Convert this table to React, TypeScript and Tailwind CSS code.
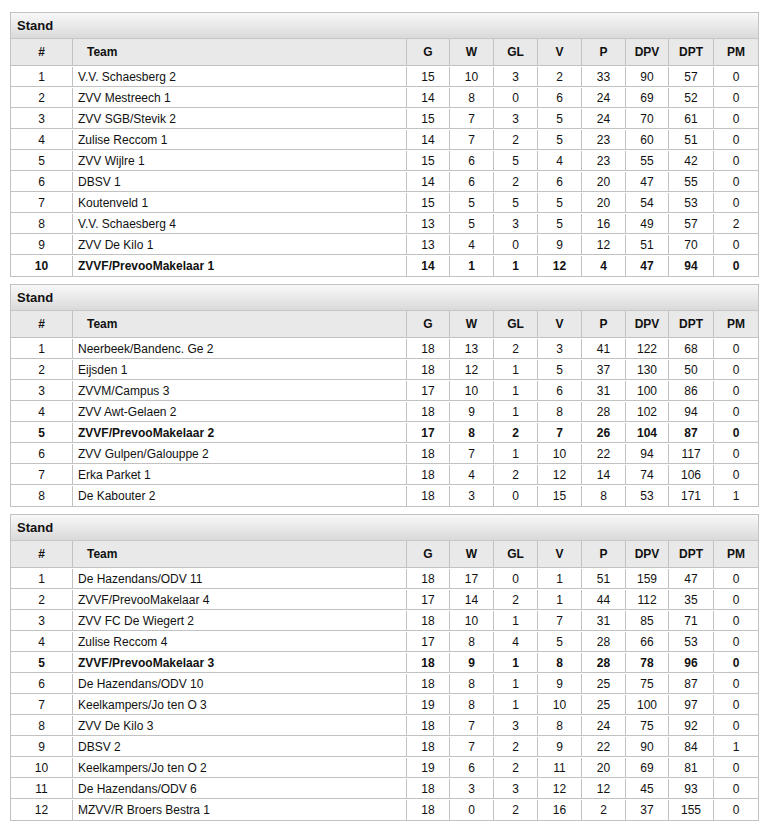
type Row = [string, string, number, number, number, number, number, number, number, number, boolean?];

const cols = ["#", "Team", "G", "W", "GL", "V", "P", "DPV", "DPT", "PM"];

const tables: Row[][] = [
  [
    ["1", "V.V. Schaesberg 2", 15, 10, 3, 2, 33, 90, 57, 0],
    ["2", "ZVV Mestreech 1", 14, 8, 0, 6, 24, 69, 52, 0],
    ["3", "ZVV SGB/Stevik 2", 15, 7, 3, 5, 24, 70, 61, 0],
    ["4", "Zulise Reccom 1", 14, 7, 2, 5, 23, 60, 51, 0],
    ["5", "ZVV Wijlre 1", 15, 6, 5, 4, 23, 55, 42, 0],
    ["6", "DBSV 1", 14, 6, 2, 6, 20, 47, 55, 0],
    ["7", "Koutenveld 1", 15, 5, 5, 5, 20, 54, 53, 0],
    ["8", "V.V. Schaesberg 4", 13, 5, 3, 5, 16, 49, 57, 2],
    ["9", "ZVV De Kilo 1", 13, 4, 0, 9, 12, 51, 70, 0],
    ["10", "ZVVF/PrevooMakelaar 1", 14, 1, 1, 12, 4, 47, 94, 0, true],
  ],
  [
    ["1", "Neerbeek/Bandenc. Ge 2", 18, 13, 2, 3, 41, 122, 68, 0],
    ["2", "Eijsden 1", 18, 12, 1, 5, 37, 130, 50, 0],
    ["3", "ZVVM/Campus 3", 17, 10, 1, 6, 31, 100, 86, 0],
    ["4", "ZVV Awt-Gelaen 2", 18, 9, 1, 8, 28, 102, 94, 0],
    ["5", "ZVVF/PrevooMakelaar 2", 17, 8, 2, 7, 26, 104, 87, 0, true],
    ["6", "ZVV Gulpen/Galouppe 2", 18, 7, 1, 10, 22, 94, 117, 0],
    ["7", "Erka Parket 1", 18, 4, 2, 12, 14, 74, 106, 0],
    ["8", "De Kabouter 2", 18, 3, 0, 15, 8, 53, 171, 1],
  ],
  [
    ["1", "De Hazendans/ODV 11", 18, 17, 0, 1, 51, 159, 47, 0],
    ["2", "ZVVF/PrevooMakelaar 4", 17, 14, 2, 1, 44, 112, 35, 0],
    ["3", "ZVV FC De Wiegert 2", 18, 10, 1, 7, 31, 85, 71, 0],
    ["4", "Zulise Reccom 4", 17, 8, 4, 5, 28, 66, 53, 0],
    ["5", "ZVVF/PrevooMakelaar 3", 18, 9, 1, 8, 28, 78, 96, 0, true],
    ["6", "De Hazendans/ODV 10", 18, 8, 1, 9, 25, 75, 87, 0],
    ["7", "Keelkampers/Jo ten O 3", 19, 8, 1, 10, 25, 100, 97, 0],
    ["8", "ZVV De Kilo 3", 18, 7, 3, 8, 24, 75, 92, 0],
    ["9", "DBSV 2", 18, 7, 2, 9, 22, 90, 84, 1],
    ["10", "Keelkampers/Jo ten O 2", 19, 6, 2, 11, 20, 69, 81, 0],
    ["11", "De Hazendans/ODV 6", 18, 3, 3, 12, 12, 45, 93, 0],
    ["12", "MZVV/R Broers Bestra 1", 18, 0, 2, 16, 2, 37, 155, 0],
  ],
];

const grid = "grid grid-cols-[61px_1fr_43px_44px_44px_44px_44px_43px_45px_45px]";

function StandTable({ rows }: { rows: Row[] }) {
  return (
    <div className="border border-[#c2c2c2] bg-white">
      {/* title bar */}
      <div className="h-[26px] pl-[6px] flex items-center bg-gradient-to-b from-[#f8f8f8] to-[#dadada] border-b border-[#c6c6c6] text-[13px] font-bold text-[#111]">
        Stand
      </div>
      {/* header */}
      <div className={`${grid} h-[27px] bg-[#e9e9e9] border-b border-[#c2c2c2] text-[12px] font-bold text-[#111]`}>
        {cols.map((c, i) => (
          <div
            key={c}
            className={
              i === 0
                ? "flex items-center justify-center"
                : i === 1
                ? "flex items-center pl-[14px] border-l border-[#c2c2c2]"
                : "flex items-center justify-center border-l border-[#c2c2c2]"
            }
          >
            {c}
          </div>
        ))}
      </div>
      {/* rows */}
      {rows.map((r, ri) => {
        const bold = r[10];
        return (
          <div
            key={ri}
            className={`${grid} h-[21px] pt-px text-[12px] text-[#111] ${ri < rows.length - 1 ? "border-b border-[#c2c2c2]" : ""} ${bold ? "font-bold" : ""}`}
          >
            {r.slice(0, 10).map((v, i) => (
              <div
                key={i}
                className={
                  i === 0
                    ? "flex items-center justify-center"
                    : i === 1
                    ? "flex items-center pl-[5px] border-l border-[#c2c2c2] whitespace-nowrap"
                    : "flex items-center justify-center border-l border-[#c2c2c2]"
                }
              >
                {String(v)}
              </div>
            ))}
          </div>
        );
      })}
    </div>
  );
}

export default function App() {
  return (
    <div className="min-h-screen bg-white px-[10px] pt-[12px] font-['Liberation_Sans',Arial,sans-serif] flex flex-col gap-[7px]">
      {tables.map((rows, i) => (
        <StandTable key={i} rows={rows} />
      ))}
    </div>
  );
}
